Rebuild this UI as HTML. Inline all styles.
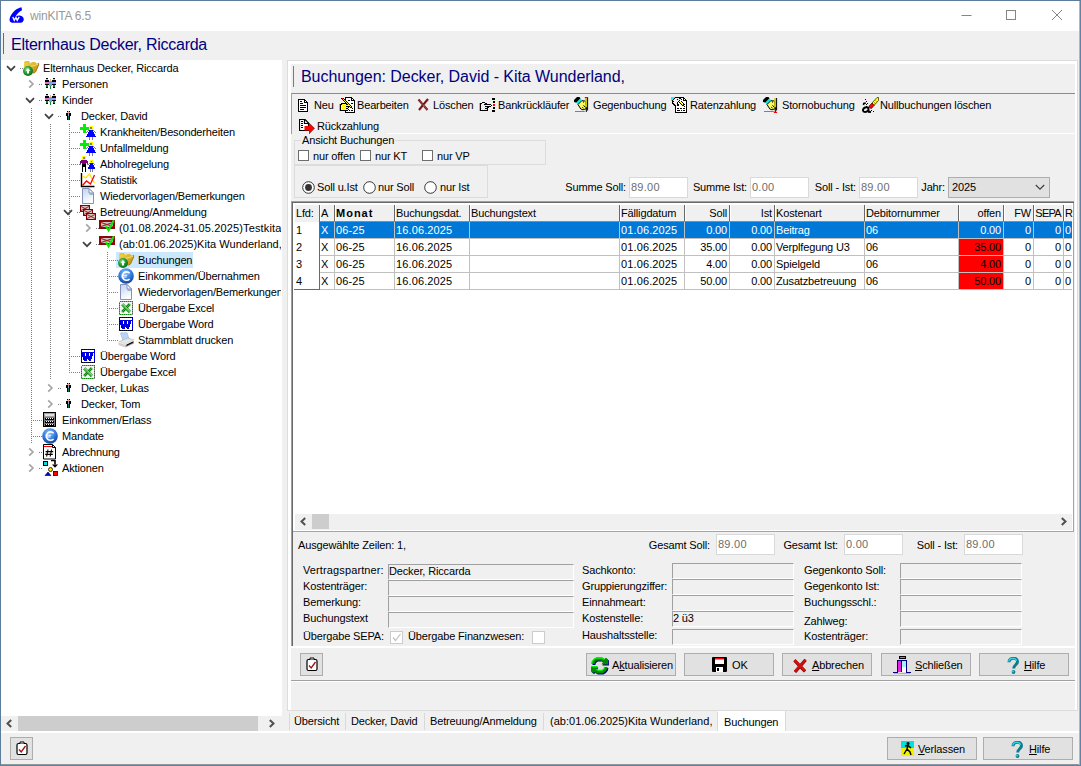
<!DOCTYPE html>
<html><head><meta charset="utf-8"><title>winKITA 6.5</title>
<style>
*{box-sizing:border-box;margin:0;padding:0}
html,body{width:1081px;height:766px;overflow:hidden;background:#f0f0f0}
body{font-family:"Liberation Sans",sans-serif;font-size:11px;color:#000;position:relative;letter-spacing:-0.15px}
.a{position:absolute}
.t{position:absolute;white-space:nowrap;line-height:13px;height:13px}
.navy{color:#000080}
.win{position:absolute;left:0;top:0;width:1081px;height:766px;border:1px solid #5b7d9b;border-right-color:#6183a3;border-bottom-color:#6183a3;pointer-events:none}
.btn{position:absolute;height:23px;background:#e1e1e1;border:1px solid #adadad}
.inp{position:absolute;background:#fff;border:1px solid #d9d9d9;color:#6d6d6d;height:21px;line-height:18px;padding-left:1px;font-size:11px;letter-spacing:0.25px}
.fld{position:absolute;height:16px;border-top:1px solid #a0a0a0;border-left:1px solid #a0a0a0;border-bottom:1px solid #fff;border-right:1px solid #fff;line-height:13px;white-space:nowrap}
.cb{position:absolute;width:13px;height:13px;background:#fff;border:1px solid #333}
.rd{position:absolute;width:13px;height:13px;background:#fff;border:1px solid #333;border-radius:50%}
</style></head>
<body>
<div class="a" style="left:1px;top:1px;width:1079px;height:30px;background:#fff"></div>
<div class="t " style="left:30px;top:9px;font-size:12px;color:#999;letter-spacing:-0.2px;line-height:14px;height:14px">winKITA 6.5</div>
<svg class="a" style="left:9px;top:6px" width="16" height="18" viewBox="0 0 16 18"><path d="M12.500 1.200c-5 1-8.500 4.500-10.500 8-1.800 3-2.500 7.300 1.500 7.600h8c3.500 0 4.500-4.800 1.500-6.600-2-1.200-4.500-.6-6.500.3 1.500-2.500 3.500-4.800 6.500-6.300z" fill="#0000ff"/><path d="M3.800 11l1.500 3.300 1.700-2.800 1.200 2.800 2-3.500" fill="none" stroke="#fff" stroke-width="1.400"/></svg>
<svg class="a" style="left:950px;top:0;width:131px;height:31px" viewBox="0 0 131 31"><g fill="none" stroke="#858585" stroke-width="1"><path d="M11.5 15.5h10"/><rect x="56.5" y="10.5" width="9" height="9"/><path d="M102 10l10 10M112 10l-10 10"/></g></svg>
<div class="a" style="left:3px;top:33px;width:1px;height:21px;background:#6a6a6a"></div>
<div class="t navy" style="left:11px;top:35px;font-size:16px;line-height:19px;height:19px;letter-spacing:-0.25px">Elternhaus Decker, Riccarda</div>
<div class="a" style="left:1px;top:60px;width:281px;height:656px;background:#fff"></div>
<div class="a" style="left:287px;top:60px;width:791px;height:651px;border:1px solid #dcdcdc;background:#f0f0f0"></div>
<div class="a" style="left:288px;top:61px;width:789px;height:3px;background:#fff"></div>
<div class="a" style="left:288px;top:61px;width:3px;height:649px;background:#fff"></div>
<div class="a" style="left:1075px;top:61px;width:2px;height:649px;background:#fff"></div>
<div class="a" style="left:1px;top:60px;width:280px;height:656px;overflow:hidden">
<div class="a" style="left:30px;top:48px;width:1px;height:336px;background:repeating-linear-gradient(180deg,#808080 0 1px,transparent 1px 2px)"></div>
<div class="a" style="left:49px;top:64px;width:1px;height:255px;background:repeating-linear-gradient(180deg,#808080 0 1px,transparent 1px 2px)"></div>
<div class="a" style="left:68px;top:64px;width:1px;height:249px;background:repeating-linear-gradient(180deg,#808080 0 1px,transparent 1px 2px)"></div>
<div class="a" style="left:106px;top:192px;width:1px;height:89px;background:repeating-linear-gradient(180deg,#808080 0 1px,transparent 1px 2px)"></div>
<svg class="a" style="left:5px;top:5px" width="10" height="7" viewBox="0 0 10 7"><path d="M1 1.200l4 4 4-4" fill="none" stroke="#404040" stroke-width="1.700"/></svg>
<div class="a" style="left:19px;top:8px;width:3px;height:1px;background:repeating-linear-gradient(90deg,#808080 0 1px,transparent 1px 2px)"></div>
<svg class="a" style="left:22px;top:0px" width="17" height="17" viewBox="0 0 17 17"><defs><radialGradient id="gc" cx="0.4" cy="0.35" r="0.7"><stop offset="0" stop-color="#8ae08a"/><stop offset="0.55" stop-color="#1f9a2f"/><stop offset="1" stop-color="#0a6418"/></radialGradient><linearGradient id="fy" x1="0" y1="0" x2="1" y2="1"><stop offset="0" stop-color="#f8dc50"/><stop offset="1" stop-color="#b88410"/></linearGradient></defs><path d="M1 2.300L2.200 1H6L7 2.300V7H1z" fill="#eec22c"/><path d="M1 3.300H7.200L9 2H12L13.200 3.400 15.600 3.200 15.600 5 12.500 12 10.500 13.200H5V7H1z" fill="url(#fy)"/><path d="M15.600 3.200V5L12.500 12 10.500 13.200" fill="none" stroke="#a87808" stroke-width="1"/><path d="M7.500 6.500L15 4.300" stroke="#fbe680" stroke-width=".8"/><circle cx="5" cy="11" r="5" fill="url(#gc)"/><path d="M5 8l2.400 2.700h-1.400v2.700h-2v-2.700h-1.400z" fill="#fff"/></svg>
<div class="t" style="left:42px;top:2px;">Elternhaus Decker, Riccarda</div>
<svg class="a" style="left:26.5px;top:19px" width="7" height="10" viewBox="0 0 7 10"><path d="M1.200 1.300l3.700 3.700-3.700 3.700" fill="none" stroke="#a6a6a6" stroke-width="1.700"/></svg>
<div class="a" style="left:38px;top:24px;width:3px;height:1px;background:repeating-linear-gradient(90deg,#808080 0 1px,transparent 1px 2px)"></div>
<svg class="a" style="left:44px;top:18px" width="11" height="11" viewBox="0 0 11 11" shape-rendering="crispEdges"><path fill="#000" d="M1 0h2v1h-2zM8 0h2v1h-2zM0 2h4v1h-4zM7 2h4v1h-4zM0 3h4v1h-4zM7 3h4v1h-4zM0 6h4v1h-4zM7 6h4v1h-4zM1 9h2v1h-2zM8 9h2v1h-2z"/><path fill="#f0b070" d="M1 1h2v1h-2zM5 1h1v1h-1zM8 1h2v1h-2zM5 2h1v1h-1z"/><path fill="#70a8e0" d="M4 3h3v1h-3zM4 4h3v1h-3zM4 5h3v1h-3zM4 6h3v1h-3zM4 7h3v1h-3z"/><path fill="#d070d8" d="M0 4h4v1h-4zM0 5h4v1h-4z"/><path fill="#9898ff" d="M7 4h4v1h-4zM7 5h4v1h-4z"/><path fill="#0a8a2a" d="M1 7h2v1h-2zM8 7h2v1h-2zM1 8h2v1h-2zM5 8h1v1h-1zM8 8h2v1h-2zM5 9h1v1h-1zM5 10h1v1h-1z"/></svg>
<div class="t" style="left:61px;top:18px;">Personen</div>
<svg class="a" style="left:24px;top:37px" width="10" height="7" viewBox="0 0 10 7"><path d="M1 1.200l4 4 4-4" fill="none" stroke="#404040" stroke-width="1.700"/></svg>
<div class="a" style="left:38px;top:40px;width:3px;height:1px;background:repeating-linear-gradient(90deg,#808080 0 1px,transparent 1px 2px)"></div>
<svg class="a" style="left:44px;top:34px" width="11" height="11" viewBox="0 0 11 11" shape-rendering="crispEdges"><path fill="#000" d="M1 0h2v1h-2zM8 0h2v1h-2zM0 2h4v1h-4zM7 2h4v1h-4zM0 3h4v1h-4zM7 3h4v1h-4zM0 6h4v1h-4zM7 6h4v1h-4zM1 9h2v1h-2zM8 9h2v1h-2z"/><path fill="#f0b070" d="M1 1h2v1h-2zM5 1h1v1h-1zM8 1h2v1h-2zM5 2h1v1h-1z"/><path fill="#70a8e0" d="M4 3h3v1h-3zM4 4h3v1h-3zM4 5h3v1h-3zM4 6h3v1h-3zM4 7h3v1h-3z"/><path fill="#d070d8" d="M0 4h4v1h-4zM0 5h4v1h-4z"/><path fill="#9898ff" d="M7 4h4v1h-4zM7 5h4v1h-4z"/><path fill="#0a8a2a" d="M1 7h2v1h-2zM8 7h2v1h-2zM1 8h2v1h-2zM5 8h1v1h-1zM8 8h2v1h-2zM5 9h1v1h-1zM5 10h1v1h-1z"/></svg>
<div class="t" style="left:61px;top:34px;">Kinder</div>
<svg class="a" style="left:43px;top:53px" width="10" height="7" viewBox="0 0 10 7"><path d="M1 1.200l4 4 4-4" fill="none" stroke="#404040" stroke-width="1.700"/></svg>
<div class="a" style="left:57px;top:56px;width:3px;height:1px;background:repeating-linear-gradient(90deg,#808080 0 1px,transparent 1px 2px)"></div>
<svg class="a" style="left:65px;top:51px" width="5" height="9" viewBox="0 0 5 9" shape-rendering="crispEdges"><path fill="#000" d="M1 0h1v1h-1zM3 0h1v1h-1zM0 2h2v1h-2zM3 2h2v1h-2zM0 3h2v1h-2zM3 3h2v1h-2zM0 4h2v1h-2zM3 4h2v1h-2zM1 5h1v1h-1zM3 5h1v1h-1zM1 6h1v1h-1zM3 6h1v1h-1zM1 7h1v1h-1zM3 7h1v1h-1zM1 8h1v1h-1zM3 8h1v1h-1z"/><path fill="#f0b070" d="M2 0h1v1h-1zM1 1h3v1h-3z"/><path fill="#9898ff" d="M2 2h1v1h-1zM2 3h1v1h-1zM2 4h1v1h-1z"/><path fill="#107060" d="M2 5h1v1h-1zM2 6h1v1h-1zM2 7h1v1h-1zM2 8h1v1h-1z"/></svg>
<div class="t" style="left:80px;top:50px;">Decker, David</div>
<div class="a" style="left:70px;top:72px;width:9px;height:1px;background:repeating-linear-gradient(90deg,#808080 0 1px,transparent 1px 2px)"></div>
<svg class="a" style="left:79px;top:64px" width="16" height="16" viewBox="0 0 16 16" shape-rendering="crispEdges"><path fill="#00f000" d="M3 0h3v1h-3zM3 1h3v1h-3zM3 2h3v1h-3zM0 3h9v1h-9zM0 4h9v1h-9zM0 5h9v1h-9zM3 6h3v1h-3zM3 7h3v1h-3zM3 8h3v1h-3z"/><path fill="#ffff00" d="M9 2h4v1h-4zM9 3h1v1h-1zM12 3h1v1h-1zM9 4h1v1h-1zM12 4h1v1h-1zM9 5h4v1h-4z"/><path fill="#808080" d="M10 3h2v1h-2zM10 4h2v1h-2zM8 6h1v1h-1zM13 6h1v1h-1zM7 7h1v1h-1zM14 7h1v1h-1zM6 8h1v1h-1zM15 8h1v1h-1zM9 13h1v1h-1zM12 13h1v1h-1zM9 14h1v1h-1zM12 14h1v1h-1zM9 15h1v1h-1zM12 15h1v1h-1z"/><path fill="#0000ff" d="M9 6h4v1h-4zM9 7h4v1h-4zM8 8h6v1h-6zM8 9h6v1h-6zM7 10h8v1h-8zM7 11h8v1h-8zM6 12h10v1h-10z"/></svg>
<div class="t" style="left:99px;top:66px;">Krankheiten/Besonderheiten</div>
<div class="a" style="left:70px;top:88px;width:9px;height:1px;background:repeating-linear-gradient(90deg,#808080 0 1px,transparent 1px 2px)"></div>
<svg class="a" style="left:79px;top:80px" width="16" height="16" viewBox="0 0 16 16" shape-rendering="crispEdges"><path fill="#00f000" d="M3 0h3v1h-3zM3 1h3v1h-3zM3 2h3v1h-3zM0 3h9v1h-9zM0 4h9v1h-9zM0 5h9v1h-9zM3 6h3v1h-3zM3 7h3v1h-3zM3 8h3v1h-3z"/><path fill="#ffff00" d="M9 2h4v1h-4zM9 3h1v1h-1zM12 3h1v1h-1zM9 4h1v1h-1zM12 4h1v1h-1zM9 5h4v1h-4z"/><path fill="#808080" d="M10 3h2v1h-2zM10 4h2v1h-2zM8 6h1v1h-1zM13 6h1v1h-1zM7 7h1v1h-1zM14 7h1v1h-1zM6 8h1v1h-1zM15 8h1v1h-1zM9 13h1v1h-1zM12 13h1v1h-1zM9 14h1v1h-1zM12 14h1v1h-1zM9 15h1v1h-1zM12 15h1v1h-1z"/><path fill="#0000ff" d="M9 6h4v1h-4zM9 7h4v1h-4zM8 8h6v1h-6zM8 9h6v1h-6zM7 10h8v1h-8zM7 11h8v1h-8zM6 12h10v1h-10z"/></svg>
<div class="t" style="left:99px;top:82px;">Unfallmeldung</div>
<div class="a" style="left:70px;top:104px;width:9px;height:1px;background:repeating-linear-gradient(90deg,#808080 0 1px,transparent 1px 2px)"></div>
<svg class="a" style="left:79px;top:96px" width="16" height="16" viewBox="0 0 16 16" shape-rendering="crispEdges"><path fill="#ffff00" d="M2 0h4v1h-4zM2 1h1v1h-1zM5 1h1v1h-1zM2 2h1v1h-1zM5 2h1v1h-1zM2 3h4v1h-4zM10 4h3v1h-3zM10 5h1v1h-1zM12 5h1v1h-1zM10 6h3v1h-3z"/><path fill="#808080" d="M3 1h2v1h-2zM3 2h2v1h-2zM11 5h1v1h-1zM9 7h1v1h-1zM13 7h1v1h-1zM0 8h1v1h-1zM7 8h2v1h-2zM14 8h1v1h-1zM10 13h1v1h-1zM12 13h1v1h-1zM10 14h1v1h-1zM12 14h1v1h-1zM10 15h1v1h-1zM12 15h1v1h-1z"/><path fill="#800080" d="M1 4h6v1h-6zM0 5h8v1h-8zM0 6h8v1h-8zM0 7h1v1h-1zM2 7h4v1h-4zM7 7h1v1h-1z"/><path fill="#0000ff" d="M10 7h3v1h-3zM10 8h3v1h-3zM9 9h5v1h-5zM9 10h5v1h-5zM8 11h7v1h-7zM8 12h7v1h-7z"/><path fill="#000" d="M2 8h4v1h-4zM2 9h4v1h-4zM2 10h4v1h-4zM2 11h1v1h-1zM5 11h1v1h-1zM2 12h1v1h-1zM5 12h1v1h-1zM2 13h1v1h-1zM5 13h1v1h-1zM2 14h1v1h-1zM5 14h1v1h-1zM2 15h1v1h-1zM5 15h1v1h-1z"/></svg>
<div class="t" style="left:99px;top:98px;">Abholregelung</div>
<div class="a" style="left:70px;top:120px;width:9px;height:1px;background:repeating-linear-gradient(90deg,#808080 0 1px,transparent 1px 2px)"></div>
<svg class="a" style="left:79px;top:112px" width="16" height="16" viewBox="0 0 16 16"><path d="M1.5 1v13.5h13" stroke="#000" stroke-width="1.4" fill="none"/><path d="M2.5 4l3 2 4-4 3 6 2 3" stroke="#ffe600" stroke-width="1.3" fill="none"/><path d="M2.5 13.5l4-4.5 4 3 4-9" stroke="#ff0000" stroke-width="1.3" fill="none"/></svg>
<div class="t" style="left:99px;top:114px;">Statistik</div>
<div class="a" style="left:70px;top:136px;width:9px;height:1px;background:repeating-linear-gradient(90deg,#808080 0 1px,transparent 1px 2px)"></div>
<svg class="a" style="left:81px;top:128px" width="12" height="16" viewBox="0 0 12 16"><defs><linearGradient id="dg" x1="0" y1="0" x2="0.3" y2="1"><stop offset="0" stop-color="#bcd4f4"/><stop offset="1" stop-color="#fdfeff"/></linearGradient></defs><path d="M.5 .5h6.5l4.5 4.5v10.5h-11z" fill="url(#dg)" stroke="#8890b8" stroke-width="1"/><path d="M7 .5v4.5h4.5z" fill="#f4f8ff" stroke="#8890b8" stroke-width="1"/><path d="M7.5 5.5h4v1.5h-4z" fill="#7888a8" opacity=".6"/></svg>
<div class="t" style="left:99px;top:130px;">Wiedervorlagen/Bemerkungen</div>
<svg class="a" style="left:62px;top:149px" width="10" height="7" viewBox="0 0 10 7"><path d="M1 1.200l4 4 4-4" fill="none" stroke="#404040" stroke-width="1.700"/></svg>
<div class="a" style="left:76px;top:152px;width:3px;height:1px;background:repeating-linear-gradient(90deg,#808080 0 1px,transparent 1px 2px)"></div>
<svg class="a" style="left:79px;top:144px" width="17" height="17" viewBox="0 0 17 17"><rect x="0" y="1" width="10" height="7" fill="#800000"/><rect x="1" y="2" width="8" height="5" fill="#d8c8c8"/><path d="M1 2.5l8 4M1 6.5l8 -4" stroke="#a02020" stroke-width="1"/><rect x="3" y="5" width="10" height="7" fill="#800000"/><rect x="4" y="6" width="8" height="5" fill="#d8c8c8"/><path d="M4 6.5l8 4M4 10.5l8 -4" stroke="#a02020" stroke-width="1"/><rect x="6" y="9" width="10" height="7" fill="#800000"/><rect x="7" y="10" width="8" height="5" fill="#d8c8c8"/><path d="M7 10.5l8 4M7 14.5l8 -4" stroke="#a02020" stroke-width="1"/></svg>
<div class="t" style="left:99px;top:146px;">Betreuung/Anmeldung</div>
<svg class="a" style="left:83.5px;top:163px" width="7" height="10" viewBox="0 0 7 10"><path d="M1.200 1.300l3.700 3.700-3.700 3.700" fill="none" stroke="#a6a6a6" stroke-width="1.700"/></svg>
<div class="a" style="left:95px;top:168px;width:3px;height:1px;background:repeating-linear-gradient(90deg,#808080 0 1px,transparent 1px 2px)"></div>
<svg class="a" style="left:98px;top:160px" width="17" height="13" viewBox="0 0 17 13"><rect x="0" y="0" width="16" height="9" fill="#8a0808"/><rect x="2" y="2" width="12" height="5" fill="#d0c8c8"/><path d="M2 2.5l12 4M2 6.5l12-4" stroke="#a02020" stroke-width="1.2"/><path d="M7 6.2l2.6 4.3 5.2-10.3" stroke="#00f000" stroke-width="2" fill="none"/></svg>
<div class="t" style="left:118px;top:162px;letter-spacing:0.13px;">(01.08.2024-31.05.2025)Testkita</div>
<svg class="a" style="left:81px;top:181px" width="10" height="7" viewBox="0 0 10 7"><path d="M1 1.200l4 4 4-4" fill="none" stroke="#404040" stroke-width="1.700"/></svg>
<div class="a" style="left:95px;top:184px;width:3px;height:1px;background:repeating-linear-gradient(90deg,#808080 0 1px,transparent 1px 2px)"></div>
<svg class="a" style="left:98px;top:176px" width="17" height="13" viewBox="0 0 17 13"><rect x="0" y="0" width="16" height="9" fill="#8a0808"/><rect x="2" y="2" width="12" height="5" fill="#d0c8c8"/><path d="M2 2.5l12 4M2 6.5l12-4" stroke="#a02020" stroke-width="1.2"/><path d="M7 6.2l2.6 4.3 5.2-10.3" stroke="#00f000" stroke-width="2" fill="none"/></svg>
<div class="t" style="left:118px;top:178px;letter-spacing:0.03px;">(ab:01.06.2025)Kita Wunderland,</div>
<div class="a" style="left:115px;top:192px;width:77px;height:16px;background:#cce8ff"></div>
<div class="a" style="left:108px;top:200px;width:9px;height:1px;background:repeating-linear-gradient(90deg,#808080 0 1px,transparent 1px 2px)"></div>
<svg class="a" style="left:117px;top:192px" width="17" height="17" viewBox="0 0 17 17"><defs><radialGradient id="gc" cx="0.4" cy="0.35" r="0.7"><stop offset="0" stop-color="#8ae08a"/><stop offset="0.55" stop-color="#1f9a2f"/><stop offset="1" stop-color="#0a6418"/></radialGradient><linearGradient id="fy" x1="0" y1="0" x2="1" y2="1"><stop offset="0" stop-color="#f8dc50"/><stop offset="1" stop-color="#b88410"/></linearGradient></defs><path d="M1 2.300L2.200 1H6L7 2.300V7H1z" fill="#eec22c"/><path d="M1 3.300H7.200L9 2H12L13.200 3.400 15.600 3.200 15.600 5 12.500 12 10.500 13.200H5V7H1z" fill="url(#fy)"/><path d="M15.600 3.200V5L12.500 12 10.500 13.200" fill="none" stroke="#a87808" stroke-width="1"/><path d="M7.500 6.500L15 4.300" stroke="#fbe680" stroke-width=".8"/><circle cx="5" cy="11" r="5" fill="url(#gc)"/><path d="M5 8l2.400 2.700h-1.400v2.700h-2v-2.700h-1.400z" fill="#fff"/></svg>
<div class="t" style="left:137px;top:194px;">Buchungen</div>
<div class="a" style="left:108px;top:216px;width:9px;height:1px;background:repeating-linear-gradient(90deg,#808080 0 1px,transparent 1px 2px)"></div>
<svg class="a" style="left:117px;top:208px" width="16" height="16" viewBox="0 0 16 16"><defs><radialGradient id="eg" cx="0.45" cy="0.3" r="0.75"><stop offset="0" stop-color="#8cc4ff"/><stop offset="0.55" stop-color="#2f7be0"/><stop offset="1" stop-color="#12348c"/></radialGradient></defs><circle cx="8" cy="8" r="7.8" fill="url(#eg)"/><path d="M11.6 5.2a4.2 4.2 0 1 0 0 5.8" fill="none" stroke="#fff" stroke-width="1.6"/><path d="M3.6 7.2h5.6M3.6 9h5" stroke="#fff" stroke-width="1.1"/></svg>
<div class="t" style="left:137px;top:210px;">Einkommen/Übernahmen</div>
<div class="a" style="left:108px;top:232px;width:9px;height:1px;background:repeating-linear-gradient(90deg,#808080 0 1px,transparent 1px 2px)"></div>
<svg class="a" style="left:119px;top:224px" width="12" height="16" viewBox="0 0 12 16"><defs><linearGradient id="dg" x1="0" y1="0" x2="0.3" y2="1"><stop offset="0" stop-color="#bcd4f4"/><stop offset="1" stop-color="#fdfeff"/></linearGradient></defs><path d="M.5 .5h6.5l4.5 4.5v10.5h-11z" fill="url(#dg)" stroke="#8890b8" stroke-width="1"/><path d="M7 .5v4.5h4.5z" fill="#f4f8ff" stroke="#8890b8" stroke-width="1"/><path d="M7.5 5.5h4v1.5h-4z" fill="#7888a8" opacity=".6"/></svg>
<div class="t" style="left:137px;top:226px;">Wiedervorlagen/Bemerkungen</div>
<div class="a" style="left:108px;top:248px;width:9px;height:1px;background:repeating-linear-gradient(90deg,#808080 0 1px,transparent 1px 2px)"></div>
<svg class="a" style="left:118px;top:241px" width="14" height="14" viewBox="0 0 14 14" shape-rendering="crispEdges"><defs><pattern id="pxl" width="2" height="2" patternUnits="userSpaceOnUse"><rect width="2" height="2" fill="#0a8a0a"/><rect x="1" width="1" height="1" fill="#7a8a7a"/><rect y="1" width="1" height="1" fill="#7a8a7a"/></pattern></defs><rect x="0" y="0" width="14" height="14" fill="#f4f4f4"/><path d="M.5 .5h13v13h-13z" fill="none" stroke="#0a8a0a" stroke-width="1" stroke-dasharray="1 1"/><path d="M.5 .5h13v13h-13z" fill="none" stroke="#909890" stroke-width="1" stroke-dasharray="1 1" stroke-dashoffset="1"/><path d="M3.200 3.300l7.800 7.800M10.800 3l-7.600 8" stroke="url(#pxl)" stroke-width="3" fill="none" shape-rendering="auto"/><path d="M3.500 3l8 8" stroke="#f4f4f4" stroke-width=".8" shape-rendering="auto"/></svg>
<div class="t" style="left:137px;top:242px;">Übergabe Excel</div>
<div class="a" style="left:108px;top:264px;width:9px;height:1px;background:repeating-linear-gradient(90deg,#808080 0 1px,transparent 1px 2px)"></div>
<svg class="a" style="left:118px;top:257px" width="14" height="14" viewBox="0 0 14 14" shape-rendering="crispEdges"><defs><pattern id="pwd" width="2" height="2" patternUnits="userSpaceOnUse"><rect width="2" height="2" fill="#0000f0"/><rect x="1" width="1" height="1" fill="#000"/><rect y="1" width="1" height="1" fill="#000"/></pattern></defs><rect x="0" y="0" width="14" height="14" fill="#fff"/><path d="M.5 .5h13v13h-13z" fill="none" stroke="#0000f0" stroke-width="1"/><path d="M.5 .5h13v13h-13z" fill="none" stroke="#000" stroke-width="1" stroke-dasharray="1 1"/><path d="M1 3h12l-3 9h-2l-1-3-1 3h-3l-2-6z" fill="url(#pwd)"/><rect x="4" y="4" width="1" height="3" fill="#fff"/><rect x="8" y="4" width="1" height="3" fill="#fff"/></svg>
<div class="t" style="left:137px;top:258px;">Übergabe Word</div>
<div class="a" style="left:108px;top:280px;width:9px;height:1px;background:repeating-linear-gradient(90deg,#808080 0 1px,transparent 1px 2px)"></div>
<svg class="a" style="left:117px;top:272px" width="17" height="16" viewBox="0 0 17 16"><path d="M2.500 1.200C4 -.2 5.500 1.800 7.200 .4L9.200 .9 11 7.200 5 8.800z" fill="#b8d4f6" stroke="#8fb0e0" stroke-width=".6"/><path d="M1 9.600L10 6 16 8 7.500 12.300z" fill="#e6e6e6" stroke="#a8a8a8" stroke-width=".5"/><path d="M.5 10L7.500 12.500V15.600L.5 12.900z" fill="#cfcfcf"/><path d="M7.500 12.500L16 8.300V11.400L7.500 15.600z" fill="#a4a4a4"/><path d="M8.500 13.400L15 10.200" stroke="#111" stroke-width="1.300"/><path d="M9.500 14.500l4-2 1.200.7-4 2z" fill="#f4f4f4"/><path d="M.5 10L7.500 12.500 16 8.300" fill="none" stroke="#fafafa" stroke-width=".7"/></svg>
<div class="t" style="left:137px;top:274px;">Stammblatt drucken</div>
<div class="a" style="left:70px;top:296px;width:9px;height:1px;background:repeating-linear-gradient(90deg,#808080 0 1px,transparent 1px 2px)"></div>
<svg class="a" style="left:80px;top:289px" width="14" height="14" viewBox="0 0 14 14" shape-rendering="crispEdges"><defs><pattern id="pwd" width="2" height="2" patternUnits="userSpaceOnUse"><rect width="2" height="2" fill="#0000f0"/><rect x="1" width="1" height="1" fill="#000"/><rect y="1" width="1" height="1" fill="#000"/></pattern></defs><rect x="0" y="0" width="14" height="14" fill="#fff"/><path d="M.5 .5h13v13h-13z" fill="none" stroke="#0000f0" stroke-width="1"/><path d="M.5 .5h13v13h-13z" fill="none" stroke="#000" stroke-width="1" stroke-dasharray="1 1"/><path d="M1 3h12l-3 9h-2l-1-3-1 3h-3l-2-6z" fill="url(#pwd)"/><rect x="4" y="4" width="1" height="3" fill="#fff"/><rect x="8" y="4" width="1" height="3" fill="#fff"/></svg>
<div class="t" style="left:99px;top:290px;">Übergabe Word</div>
<div class="a" style="left:70px;top:312px;width:9px;height:1px;background:repeating-linear-gradient(90deg,#808080 0 1px,transparent 1px 2px)"></div>
<svg class="a" style="left:80px;top:305px" width="14" height="14" viewBox="0 0 14 14" shape-rendering="crispEdges"><defs><pattern id="pxl" width="2" height="2" patternUnits="userSpaceOnUse"><rect width="2" height="2" fill="#0a8a0a"/><rect x="1" width="1" height="1" fill="#7a8a7a"/><rect y="1" width="1" height="1" fill="#7a8a7a"/></pattern></defs><rect x="0" y="0" width="14" height="14" fill="#f4f4f4"/><path d="M.5 .5h13v13h-13z" fill="none" stroke="#0a8a0a" stroke-width="1" stroke-dasharray="1 1"/><path d="M.5 .5h13v13h-13z" fill="none" stroke="#909890" stroke-width="1" stroke-dasharray="1 1" stroke-dashoffset="1"/><path d="M3.200 3.300l7.800 7.800M10.800 3l-7.600 8" stroke="url(#pxl)" stroke-width="3" fill="none" shape-rendering="auto"/><path d="M3.500 3l8 8" stroke="#f4f4f4" stroke-width=".8" shape-rendering="auto"/></svg>
<div class="t" style="left:99px;top:306px;">Übergabe Excel</div>
<svg class="a" style="left:45.5px;top:323px" width="7" height="10" viewBox="0 0 7 10"><path d="M1.200 1.300l3.700 3.700-3.700 3.700" fill="none" stroke="#a6a6a6" stroke-width="1.700"/></svg>
<div class="a" style="left:57px;top:328px;width:3px;height:1px;background:repeating-linear-gradient(90deg,#808080 0 1px,transparent 1px 2px)"></div>
<svg class="a" style="left:65px;top:323px" width="5" height="9" viewBox="0 0 5 9" shape-rendering="crispEdges"><path fill="#000" d="M1 0h1v1h-1zM3 0h1v1h-1zM0 2h2v1h-2zM3 2h2v1h-2zM0 3h2v1h-2zM3 3h2v1h-2zM0 4h2v1h-2zM3 4h2v1h-2zM1 5h1v1h-1zM3 5h1v1h-1zM1 6h1v1h-1zM3 6h1v1h-1zM1 7h1v1h-1zM3 7h1v1h-1zM1 8h1v1h-1zM3 8h1v1h-1z"/><path fill="#f0b070" d="M2 0h1v1h-1zM1 1h3v1h-3z"/><path fill="#9898ff" d="M2 2h1v1h-1zM2 3h1v1h-1zM2 4h1v1h-1z"/><path fill="#107060" d="M2 5h1v1h-1zM2 6h1v1h-1zM2 7h1v1h-1zM2 8h1v1h-1z"/></svg>
<div class="t" style="left:80px;top:322px;">Decker, Lukas</div>
<svg class="a" style="left:45.5px;top:339px" width="7" height="10" viewBox="0 0 7 10"><path d="M1.200 1.300l3.700 3.700-3.700 3.700" fill="none" stroke="#a6a6a6" stroke-width="1.700"/></svg>
<div class="a" style="left:57px;top:344px;width:3px;height:1px;background:repeating-linear-gradient(90deg,#808080 0 1px,transparent 1px 2px)"></div>
<svg class="a" style="left:65px;top:339px" width="5" height="9" viewBox="0 0 5 9" shape-rendering="crispEdges"><path fill="#000" d="M1 0h1v1h-1zM3 0h1v1h-1zM0 2h2v1h-2zM3 2h2v1h-2zM0 3h2v1h-2zM3 3h2v1h-2zM0 4h2v1h-2zM3 4h2v1h-2zM1 5h1v1h-1zM3 5h1v1h-1zM1 6h1v1h-1zM3 6h1v1h-1zM1 7h1v1h-1zM3 7h1v1h-1zM1 8h1v1h-1zM3 8h1v1h-1z"/><path fill="#f0b070" d="M2 0h1v1h-1zM1 1h3v1h-3z"/><path fill="#9898ff" d="M2 2h1v1h-1zM2 3h1v1h-1zM2 4h1v1h-1z"/><path fill="#107060" d="M2 5h1v1h-1zM2 6h1v1h-1zM2 7h1v1h-1zM2 8h1v1h-1z"/></svg>
<div class="t" style="left:80px;top:338px;">Decker, Tom</div>
<div class="a" style="left:32px;top:360px;width:9px;height:1px;background:repeating-linear-gradient(90deg,#808080 0 1px,transparent 1px 2px)"></div>
<svg class="a" style="left:42px;top:352px" width="13" height="15" viewBox="0 0 13 15" shape-rendering="crispEdges"><path fill="#000" d="M0 0h13v1h-13zM0 1h1v1h-1zM12 1h1v1h-1zM0 2h1v1h-1zM12 2h1v1h-1zM0 3h1v1h-1zM12 3h1v1h-1zM0 4h1v1h-1zM12 4h1v1h-1zM0 5h1v1h-1zM12 5h1v1h-1zM0 6h1v1h-1zM2 6h1v1h-1zM4 6h1v1h-1zM6 6h1v1h-1zM8 6h1v1h-1zM10 6h1v1h-1zM12 6h1v1h-1zM0 7h1v1h-1zM2 7h9v1h-9zM12 7h1v1h-1zM0 8h1v1h-1zM12 8h1v1h-1zM0 9h1v1h-1zM2 9h1v1h-1zM4 9h1v1h-1zM6 9h1v1h-1zM8 9h1v1h-1zM10 9h1v1h-1zM12 9h1v1h-1zM0 10h1v1h-1zM2 10h9v1h-9zM12 10h1v1h-1zM0 11h1v1h-1zM12 11h1v1h-1zM0 12h1v1h-1zM2 12h1v1h-1zM4 12h1v1h-1zM6 12h1v1h-1zM8 12h1v1h-1zM10 12h1v1h-1zM12 12h1v1h-1zM0 13h1v1h-1zM2 13h9v1h-9zM12 13h1v1h-1zM0 14h13v1h-13z"/><path fill="#a0a0a0" d="M1 1h11v1h-11zM1 2h1v1h-1zM11 2h1v1h-1zM1 3h1v1h-1zM11 3h1v1h-1zM1 4h11v1h-11z"/><path fill="#e0e0e0" d="M2 2h9v1h-9zM2 3h9v1h-9z"/><path fill="#808080" d="M1 5h11v1h-11zM1 6h1v1h-1zM11 6h1v1h-1zM1 7h1v1h-1zM11 7h1v1h-1zM1 8h11v1h-11zM1 9h1v1h-1zM11 9h1v1h-1zM1 10h1v1h-1zM11 10h1v1h-1zM1 11h11v1h-11zM1 12h1v1h-1zM11 12h1v1h-1zM1 13h1v1h-1zM11 13h1v1h-1z"/><path fill="#fff" d="M3 6h1v1h-1zM5 6h1v1h-1zM7 6h1v1h-1zM9 6h1v1h-1zM3 9h1v1h-1zM5 9h1v1h-1zM7 9h1v1h-1zM9 9h1v1h-1zM3 12h1v1h-1zM5 12h1v1h-1zM7 12h1v1h-1zM9 12h1v1h-1z"/></svg>
<div class="t" style="left:61px;top:354px;">Einkommen/Erlass</div>
<div class="a" style="left:32px;top:376px;width:9px;height:1px;background:repeating-linear-gradient(90deg,#808080 0 1px,transparent 1px 2px)"></div>
<svg class="a" style="left:41px;top:368px" width="16" height="16" viewBox="0 0 16 16"><defs><radialGradient id="eg" cx="0.45" cy="0.3" r="0.75"><stop offset="0" stop-color="#8cc4ff"/><stop offset="0.55" stop-color="#2f7be0"/><stop offset="1" stop-color="#12348c"/></radialGradient></defs><circle cx="8" cy="8" r="7.8" fill="url(#eg)"/><path d="M11.6 5.2a4.2 4.2 0 1 0 0 5.8" fill="none" stroke="#fff" stroke-width="1.6"/><path d="M3.6 7.2h5.6M3.6 9h5" stroke="#fff" stroke-width="1.1"/></svg>
<div class="t" style="left:61px;top:370px;">Mandate</div>
<svg class="a" style="left:26.5px;top:387px" width="7" height="10" viewBox="0 0 7 10"><path d="M1.200 1.300l3.700 3.700-3.700 3.700" fill="none" stroke="#a6a6a6" stroke-width="1.700"/></svg>
<div class="a" style="left:38px;top:392px;width:3px;height:1px;background:repeating-linear-gradient(90deg,#808080 0 1px,transparent 1px 2px)"></div>
<svg class="a" style="left:42px;top:384px" width="13" height="16" viewBox="0 0 13 16"><path d="M.5 .5h9l3 3v11.5h-12z" fill="#fff" stroke="#000"/><path d="M9.5 .5v3h3" fill="none" stroke="#000"/><path d="M1 2.5h8" stroke="#ff0000" stroke-width="1"/><path d="M5 5.5l-1.4 7M8.6 5.5l-1.4 7M2.6 7.6h7.6M2.2 10.4h7.6" stroke="#000" stroke-width="1.1"/></svg>
<div class="t" style="left:61px;top:386px;">Abrechnung</div>
<svg class="a" style="left:26.5px;top:403px" width="7" height="10" viewBox="0 0 7 10"><path d="M1.200 1.300l3.700 3.700-3.700 3.700" fill="none" stroke="#a6a6a6" stroke-width="1.700"/></svg>
<div class="a" style="left:38px;top:408px;width:3px;height:1px;background:repeating-linear-gradient(90deg,#808080 0 1px,transparent 1px 2px)"></div>
<svg class="a" style="left:42px;top:400px" width="16" height="16" viewBox="0 0 16 16"><rect x=".5" y="1.5" width="4" height="4" fill="#00e0e0" stroke="#000"/><path d="M8 .5h4v4" fill="none" stroke="#000" stroke-width="1.6"/><path d="M9 4.5h6l-3 3.2z" fill="#000"/><circle cx="7.5" cy="9.5" r="2" fill="#ffe600" stroke="#000" stroke-width=".8"/><path d="M2 15.5l3-3.5 3 3.5z" fill="#0000e0" stroke="#000" stroke-width=".6"/><rect x="10.5" y="11.5" width="4" height="4" fill="#ff0000" stroke="#000" stroke-width=".8"/></svg>
<div class="t" style="left:61px;top:402px;">Aktionen</div>
</div>
<div class="a" style="left:1px;top:716px;width:280px;height:15px;background:#f0f0f0"></div>
<div class="a" style="left:18px;top:716px;width:240px;height:15px;background:#cdcdcd"></div>
<svg class="a" style="left:5px;top:719px" width="8" height="9" viewBox="0 0 8 9"><path d="M6.200 1l-3.700 3.500 3.700 3.500" fill="none" stroke="#505050" stroke-width="2"/></svg>
<svg class="a" style="left:268px;top:719px" width="8" height="9" viewBox="0 0 8 9"><path d="M1.800 1l3.700 3.500-3.700 3.500" fill="none" stroke="#505050" stroke-width="2"/></svg>
<div class="a" style="left:293px;top:66px;width:1px;height:21px;background:#7a7a7a"></div>
<div class="t navy" style="left:301px;top:67px;font-size:16px;line-height:19px;height:19px;letter-spacing:-0.05px">Buchungen: Decker, David - Kita Wunderland,</div>
<div class="a" style="left:291px;top:93px;width:784px;height:1px;background:#8a8a8a"></div>
<div class="a" style="left:291px;top:93px;width:1px;height:41px;background:#a0a0a0"></div>
<div class="a" style="left:387px;top:133px;width:688px;height:1px;background:#fff"></div>
<svg class="a" style="left:298px;top:99px" width="10" height="13" viewBox="0 0 10 13" shape-rendering="crispEdges"><path fill="#000" d="M0 0h7v1h-7zM0 1h1v1h-1zM6 1h2v1h-2zM0 2h1v1h-1zM2 2h2v1h-2zM6 2h1v1h-1zM8 2h1v1h-1zM0 3h1v1h-1zM6 3h4v1h-4zM0 4h1v1h-1zM2 4h3v1h-3zM9 4h1v1h-1zM0 5h1v1h-1zM9 5h1v1h-1zM0 6h1v1h-1zM2 6h6v1h-6zM9 6h1v1h-1zM0 7h1v1h-1zM9 7h1v1h-1zM0 8h1v1h-1zM2 8h6v1h-6zM9 8h1v1h-1zM0 9h1v1h-1zM9 9h1v1h-1zM0 10h1v1h-1zM2 10h4v1h-4zM9 10h1v1h-1zM0 11h1v1h-1zM9 11h1v1h-1zM0 12h10v1h-10z"/><path fill="#fff" d="M1 1h5v1h-5zM1 2h1v1h-1zM4 2h2v1h-2zM7 2h1v1h-1zM1 3h5v1h-5zM1 4h1v1h-1zM5 4h4v1h-4zM1 5h8v1h-8zM1 6h1v1h-1zM8 6h1v1h-1zM1 7h8v1h-8zM1 8h1v1h-1zM8 8h1v1h-1zM1 9h8v1h-8zM1 10h1v1h-1zM6 10h3v1h-3zM1 11h8v1h-8z"/></svg>
<div class="t " style="left:314px;top:99px;">Neu</div>
<svg class="a" style="left:339px;top:97px" width="16" height="16" viewBox="0 0 16 16" shape-rendering="crispEdges"><path fill="#000" d="M6 0h7v1h-7zM2 1h1v1h-1zM4 1h1v1h-1zM6 1h1v1h-1zM12 1h2v1h-2zM3 2h1v1h-1zM5 2h2v1h-2zM12 2h1v1h-1zM14 2h1v1h-1zM4 3h1v1h-1zM6 3h1v1h-1zM9 3h2v1h-2zM12 3h4v1h-4zM5 4h1v1h-1zM7 4h1v1h-1zM15 4h1v1h-1zM6 5h1v1h-1zM8 5h1v1h-1zM15 5h1v1h-1zM2 6h6v1h-6zM9 6h1v1h-1zM12 6h2v1h-2zM15 6h1v1h-1zM1 7h2v1h-2zM7 7h2v1h-2zM10 7h1v1h-1zM15 7h1v1h-1zM1 8h1v1h-1zM11 8h1v1h-1zM15 8h1v1h-1zM1 9h1v1h-1zM7 9h4v1h-4zM12 9h1v1h-1zM15 9h1v1h-1zM1 10h1v1h-1zM9 10h1v1h-1zM11 10h2v1h-2zM15 10h1v1h-1zM1 11h1v1h-1zM7 11h2v1h-2zM13 11h1v1h-1zM15 11h1v1h-1zM1 12h1v1h-1zM9 12h1v1h-1zM15 12h1v1h-1zM1 13h8v1h-8zM10 13h1v1h-1zM12 13h2v1h-2zM15 13h1v1h-1zM6 14h1v1h-1zM15 14h1v1h-1zM6 15h10v1h-10z"/><path fill="#ff0000" d="M3 1h1v1h-1z"/><path fill="#fff" d="M7 1h5v1h-5zM7 2h5v1h-5zM13 2h1v1h-1zM7 3h2v1h-2zM11 3h1v1h-1zM8 4h7v1h-7zM9 5h6v1h-6zM10 6h2v1h-2zM14 6h1v1h-1zM4 7h1v1h-1zM6 7h1v1h-1zM11 7h4v1h-4zM3 8h1v1h-1zM5 8h1v1h-1zM12 8h3v1h-3zM2 9h1v1h-1zM4 9h1v1h-1zM6 9h1v1h-1zM13 9h2v1h-2zM3 10h1v1h-1zM5 10h1v1h-1zM10 10h1v1h-1zM13 10h2v1h-2zM2 11h1v1h-1zM4 11h1v1h-1zM6 11h1v1h-1zM9 11h4v1h-4zM14 11h1v1h-1zM3 12h1v1h-1zM5 12h1v1h-1zM10 12h5v1h-5zM9 13h1v1h-1zM11 13h1v1h-1zM14 13h1v1h-1zM7 14h8v1h-8z"/><path fill="#ffff00" d="M4 2h1v1h-1zM5 3h1v1h-1zM6 4h1v1h-1zM7 5h1v1h-1zM8 6h1v1h-1zM3 7h1v1h-1zM5 7h1v1h-1zM9 7h1v1h-1zM2 8h1v1h-1zM4 8h1v1h-1zM6 8h5v1h-5zM3 9h1v1h-1zM5 9h1v1h-1zM11 9h1v1h-1zM2 10h1v1h-1zM4 10h1v1h-1zM6 10h3v1h-3zM3 11h1v1h-1zM5 11h1v1h-1zM2 12h1v1h-1zM4 12h1v1h-1zM6 12h3v1h-3z"/><path fill="#00ffff" d="M0 7h1v1h-1zM0 8h1v1h-1zM0 9h1v1h-1zM0 10h1v1h-1zM0 11h1v1h-1zM0 12h1v1h-1zM0 13h1v1h-1z"/></svg>
<div class="t " style="left:357px;top:99px;">Bearbeiten</div>
<svg class="a" style="left:417px;top:98px" width="13" height="14" viewBox="0 0 13 14"><path d="M1.500 1.500l9 10.500M11 1l-9 11" stroke="#7a1010" stroke-width="2.100" fill="none"/><path d="M2.500 2.500l8 9.500M12 1.500l-9 11" stroke="#b0a0a0" stroke-width=".8" fill="none" opacity=".6"/></svg>
<div class="t " style="left:433px;top:99px;">Löschen</div>
<svg class="a" style="left:479px;top:98px" width="17" height="14" viewBox="0 0 17 14" shape-rendering="crispEdges"><path fill="#000" d="M13 0h3v1h-3zM13 1h3v1h-3zM14 3h2v1h-2zM3 4h3v1h-3zM14 4h2v1h-2zM1 5h2v1h-2zM6 5h2v1h-2zM1 6h1v1h-1zM5 6h7v1h-7zM1 7h1v1h-1zM12 7h1v1h-1zM1 8h1v1h-1zM6 8h6v1h-6zM1 9h1v1h-1zM8 9h2v1h-2zM14 9h2v1h-2zM1 10h1v1h-1zM6 10h3v1h-3zM14 10h2v1h-2zM1 11h1v1h-1zM8 11h1v1h-1zM1 12h8v1h-8zM13 12h3v1h-3zM13 13h3v1h-3z"/><path fill="#00ffff" d="M0 5h1v1h-1zM0 6h1v1h-1zM0 7h1v1h-1zM0 8h1v1h-1zM0 9h1v1h-1zM0 10h1v1h-1zM0 11h1v1h-1zM0 12h1v1h-1z"/><path fill="#ffff00" d="M3 5h1v1h-1zM5 5h1v1h-1zM2 6h1v1h-1zM4 6h1v1h-1zM3 7h1v1h-1zM5 7h2v1h-2zM8 7h1v1h-1zM10 7h1v1h-1zM2 8h1v1h-1zM4 8h1v1h-1zM3 9h1v1h-1zM5 9h3v1h-3zM2 10h1v1h-1zM4 10h1v1h-1zM3 11h1v1h-1zM5 11h3v1h-3z"/><path fill="#fff" d="M4 5h1v1h-1zM3 6h1v1h-1zM2 7h1v1h-1zM4 7h1v1h-1zM7 7h1v1h-1zM9 7h1v1h-1zM11 7h1v1h-1zM3 8h1v1h-1zM5 8h1v1h-1zM2 9h1v1h-1zM4 9h1v1h-1zM3 10h1v1h-1zM5 10h1v1h-1zM2 11h1v1h-1zM4 11h1v1h-1z"/><path fill="#ff0000" d="M14 6h2v1h-2zM14 7h2v1h-2z"/></svg>
<div class="t " style="left:498px;top:99px;">Bankrückläufer</div>
<svg class="a" style="left:574px;top:97px" width="16" height="16" viewBox="0 0 16 16"><path d="M0 3L3 0H5.500L6.500 1.500 2.500 5.800 0 5z" fill="#000"/><path d="M6.500 1.500L8 3.500 3.800 7.800 2.200 5.800z" fill="#00f0f0"/><path d="M4 7.500L7.800 3.700 11.500 4 12.300 9 12.800 11.500 9 12.800 6.800 12z" fill="#fbfb60" stroke="#000" stroke-width="1"/><path d="M9 5.300l1-.5M9.500 8.300l2.200 2.400M8.300 10.300l1.200.8" stroke="#000" stroke-width="1"/><rect x="11.200" y="1.200" width="2" height="9" fill="#c8c800"/><path d="M13.600 1v12.500M12.300 11v4" stroke="#000" stroke-width="1"/><path d="M1 14.500h9.800" stroke="#808080" stroke-width="1"/><rect x="10.800" y="0" width="3.300" height="1.200" fill="#f00"/></svg>
<div class="t " style="left:593px;top:99px;">Gegenbuchung</div>
<svg class="a" style="left:671px;top:97px" width="16" height="16" viewBox="0 0 16 16" shape-rendering="crispEdges"><path fill="#00ffff" d="M0 0h4v1h-4zM0 1h3v1h-3zM0 2h2v1h-2zM0 3h1v1h-1z"/><path fill="#000" d="M4 0h9v1h-9zM3 1h1v1h-1zM8 1h2v1h-2zM12 1h2v1h-2zM2 2h1v1h-1zM6 2h1v1h-1zM10 2h1v1h-1zM12 2h1v1h-1zM14 2h1v1h-1zM1 3h1v1h-1zM8 3h1v1h-1zM12 3h4v1h-4zM1 4h2v1h-2zM7 4h1v1h-1zM10 4h1v1h-1zM15 4h1v1h-1zM1 5h1v1h-1zM6 5h1v1h-1zM8 5h1v1h-1zM11 5h1v1h-1zM15 5h1v1h-1zM1 6h2v1h-2zM6 6h1v1h-1zM9 6h1v1h-1zM12 6h1v1h-1zM15 6h1v1h-1zM2 7h2v1h-2zM6 7h2v1h-2zM10 7h1v1h-1zM12 7h2v1h-2zM15 7h1v1h-1zM3 8h2v1h-2zM6 8h2v1h-2zM11 8h2v1h-2zM15 8h1v1h-1zM4 9h1v1h-1zM13 9h1v1h-1zM15 9h1v1h-1zM4 10h1v1h-1zM15 10h1v1h-1zM4 11h1v1h-1zM6 11h2v1h-2zM9 11h2v1h-2zM12 11h2v1h-2zM15 11h1v1h-1zM4 12h1v1h-1zM15 12h1v1h-1zM4 13h1v1h-1zM6 13h3v1h-3zM10 13h1v1h-1zM12 13h2v1h-2zM15 13h1v1h-1zM4 14h1v1h-1zM15 14h1v1h-1zM4 15h12v1h-12z"/><path fill="#ffff00" d="M4 1h1v1h-1zM6 1h1v1h-1zM3 2h1v1h-1zM5 2h1v1h-1zM7 2h3v1h-3zM2 3h1v1h-1zM4 3h1v1h-1zM6 3h1v1h-1zM3 4h1v1h-1zM5 4h1v1h-1zM8 4h1v1h-1zM2 5h1v1h-1zM4 5h1v1h-1zM9 5h1v1h-1zM3 6h1v1h-1zM5 6h1v1h-1zM10 6h1v1h-1zM4 7h1v1h-1zM11 7h1v1h-1zM5 8h1v1h-1z"/><path fill="#fff" d="M5 1h1v1h-1zM7 1h1v1h-1zM10 1h2v1h-2zM4 2h1v1h-1zM11 2h1v1h-1zM13 2h1v1h-1zM3 3h1v1h-1zM5 3h1v1h-1zM7 3h1v1h-1zM9 3h3v1h-3zM4 4h1v1h-1zM6 4h1v1h-1zM9 4h1v1h-1zM11 4h4v1h-4zM3 5h1v1h-1zM5 5h1v1h-1zM7 5h1v1h-1zM10 5h1v1h-1zM12 5h3v1h-3zM4 6h1v1h-1zM7 6h2v1h-2zM11 6h1v1h-1zM13 6h2v1h-2zM5 7h1v1h-1zM8 7h2v1h-2zM14 7h1v1h-1zM8 8h3v1h-3zM13 8h2v1h-2zM5 9h8v1h-8zM14 9h1v1h-1zM5 10h10v1h-10zM5 11h1v1h-1zM8 11h1v1h-1zM11 11h1v1h-1zM14 11h1v1h-1zM5 12h10v1h-10zM5 13h1v1h-1zM9 13h1v1h-1zM11 13h1v1h-1zM14 13h1v1h-1zM5 14h10v1h-10z"/></svg>
<div class="t " style="left:690px;top:99px;">Ratenzahlung</div>
<svg class="a" style="left:763px;top:97px" width="16" height="16" viewBox="0 0 16 16"><path d="M0 3L3 0H5.500L6.500 1.500 2.500 5.800 0 5z" fill="#000"/><path d="M6.500 1.500L8 3.500 3.800 7.800 2.200 5.800z" fill="#00f0f0"/><path d="M4 7.500L7.800 3.700 11.500 4 12.300 9 12.800 11.500 9 12.800 6.800 12z" fill="#fbfb60" stroke="#000" stroke-width="1"/><path d="M9 5.300l1-.5M9.500 8.300l2.200 2.400M8.300 10.300l1.200.8" stroke="#000" stroke-width="1"/><rect x="11.200" y="1.200" width="2" height="9" fill="#c8c800"/><path d="M13.600 1v12.500M12.300 11v4" stroke="#000" stroke-width="1"/><path d="M1 14.500h9.800" stroke="#808080" stroke-width="1"/><rect x="10.800" y="14.800" width="3.300" height="1.200" fill="#f00"/></svg>
<div class="t " style="left:782px;top:99px;">Stornobuchung</div>
<svg class="a" style="left:862px;top:97px" width="17" height="16" viewBox="0 0 17 16"><path d="M10 6L15 .5H16.500V3.500L12 8.500z" fill="#ffff00" stroke="#202000" stroke-width=".7"/><path d="M10.500 6.500l1.500 2M12 5l1.500 2M13.500 3.500l1.500 1.500" stroke="#303000" stroke-width=".6" stroke-dasharray=".8 .8"/><path d="M7 9L10 6 12 8.500 9.500 11.500 7.500 11z" fill="#ff0000" stroke="#300" stroke-width=".6"/><path d="M6 10.500C3 9.500 .8 11.500 1 13.500 1.200 15.500 4.500 15.500 6 13.500M6 10L6.800 14.800 9 15" fill="none" stroke="#000" stroke-width="2"/><path d="M1.500 8l.3-1.500 2-.5" fill="none" stroke="#000" stroke-width="1.600"/><path d="M3 2.500h1M4 4.500h1M5 6.500h1M4 7.500h1M4 9.500h1M9 13.500h1M11 14.500h1" stroke="#000" stroke-width="1"/></svg>
<div class="t " style="left:880px;top:99px;">Nullbuchungen löschen</div>
<svg class="a" style="left:299px;top:119px" width="17" height="16" viewBox="0 0 17 16"><path d="M.5 .5h5.500l3.500 3.500v7.500h-9z" fill="#fff" stroke="#000" stroke-width="1.200"/><path d="M5.500 .5v4h4" fill="none" stroke="#000" stroke-width="1.200"/><path d="M2 2.500h2M2 4.500h2M2 6.500h2M2 8.500h2" stroke="#000"/><path d="M5.500 7h4.500v-3l5.500 5.300-5.500 5.700v-3.500h-4.500z" fill="#ff0000"/><path d="M10 4l5.500 5.300-5.500 5.700" fill="none" stroke="#400" stroke-width=".5"/></svg>
<div class="t " style="left:317px;top:120px;">Rückzahlung</div>
<div class="a" style="left:294px;top:140px;width:252px;height:25px;border:1px solid #dcdcdc"></div>
<div class="t " style="left:301px;top:134px;background:#f0f0f0;padding:0 1px">Ansicht Buchungen</div>
<div class="a" style="left:298px;top:150px;width:11px;height:11px;background:#fff;border:1px solid #6e6e6e"></div>
<div class="t " style="left:313px;top:150px;">nur offen</div>
<div class="a" style="left:360px;top:150px;width:11px;height:11px;background:#fff;border:1px solid #6e6e6e"></div>
<div class="t " style="left:375px;top:150px;">nur KT</div>
<div class="a" style="left:422px;top:150px;width:11px;height:11px;background:#fff;border:1px solid #6e6e6e"></div>
<div class="t " style="left:437px;top:150px;">nur VP</div>
<div class="a" style="left:294px;top:165px;width:194px;height:33px;border:1px solid #dcdcdc"></div>
<svg class="a" style="left:302px;top:181px" width="13" height="13" viewBox="0 0 13 13"><circle cx="6.500" cy="6.500" r="5.800" fill="#fff" stroke="#333" stroke-width="1"/><circle cx="6.500" cy="6.500" r="3.400" fill="#333"/></svg>
<div class="t " style="left:317px;top:181px;">Soll u.Ist</div>
<svg class="a" style="left:363px;top:181px" width="13" height="13" viewBox="0 0 13 13"><circle cx="6.500" cy="6.500" r="5.800" fill="#fff" stroke="#333" stroke-width="1"/></svg>
<div class="t " style="left:378px;top:181px;">nur Soll</div>
<svg class="a" style="left:424px;top:181px" width="13" height="13" viewBox="0 0 13 13"><circle cx="6.500" cy="6.500" r="5.800" fill="#fff" stroke="#333" stroke-width="1"/></svg>
<div class="t " style="left:440px;top:181px;">nur Ist</div>
<div class="t " style="right:455px;top:181px;">Summe Soll:</div>
<div class="inp" style="left:629px;top:177px;width:59px">89.00</div>
<div class="t " style="right:334px;top:181px;">Summe Ist:</div>
<div class="inp" style="left:750px;top:177px;width:59px">0.00</div>
<div class="t " style="right:225px;top:181px;">Soll - Ist:</div>
<div class="inp" style="left:859px;top:177px;width:59px">89.00</div>
<div class="t " style="right:136px;top:181px;">Jahr:</div>
<div class="a" style="left:948px;top:177px;width:102px;height:21px;background:#e1e1e1;border:1px solid #adadad"></div>
<div class="t " style="left:952px;top:181px;">2025</div>
<svg class="a" style="left:1035px;top:184px" width="10" height="7" viewBox="0 0 10 7"><path d="M.8 1l4.200 4.200 4.200-4.200" fill="none" stroke="#404040" stroke-width="1.200"/></svg>
<div class="a" style="left:291px;top:201px;width:783px;height:330px;background:#fff"></div>
<div class="a" style="left:291px;top:201px;width:783px;height:1px;background:#a0a0a0"></div>
<div class="a" style="left:291px;top:202px;width:783px;height:1px;background:#696969"></div>
<div class="a" style="left:291px;top:201px;width:1px;height:445px;background:#a0a0a0"></div>
<div class="a" style="left:292px;top:202px;width:1px;height:444px;background:#696969"></div>
<div class="a" style="left:293px;top:531px;width:781px;height:1px;background:#a4a4ac"></div>
<div class="a" style="left:1073px;top:203px;width:1px;height:329px;background:#a4a4ac"></div>
<div class="a" style="left:295px;top:205px;width:777px;height:16px;background:#f0f0f0"></div>
<div class="a" style="left:319px;top:205px;width:1px;height:17px;background:#696969"></div>
<div class="a" style="left:320px;top:205px;width:1px;height:16px;background:#fff"></div>
<div class="t" style="left:296px;top:207px">Lfd:</div>
<div class="a" style="left:334px;top:205px;width:1px;height:17px;background:#696969"></div>
<div class="a" style="left:335px;top:205px;width:1px;height:16px;background:#fff"></div>
<div class="t" style="left:321px;top:207px">A</div>
<div class="a" style="left:394px;top:205px;width:1px;height:17px;background:#696969"></div>
<div class="a" style="left:395px;top:205px;width:1px;height:16px;background:#fff"></div>
<div class="t" style="left:336px;top:207px"><b style="letter-spacing:1px">Monat</b></div>
<div class="a" style="left:469px;top:205px;width:1px;height:17px;background:#696969"></div>
<div class="a" style="left:470px;top:205px;width:1px;height:16px;background:#fff"></div>
<div class="t" style="left:396px;top:207px">Buchungsdat.</div>
<div class="a" style="left:619px;top:205px;width:1px;height:17px;background:#696969"></div>
<div class="a" style="left:620px;top:205px;width:1px;height:16px;background:#fff"></div>
<div class="t" style="left:471px;top:207px">Buchungstext</div>
<div class="a" style="left:684px;top:205px;width:1px;height:17px;background:#696969"></div>
<div class="a" style="left:685px;top:205px;width:1px;height:16px;background:#fff"></div>
<div class="t" style="left:621px;top:207px">Fälligdatum</div>
<div class="a" style="left:729px;top:205px;width:1px;height:17px;background:#696969"></div>
<div class="a" style="left:730px;top:205px;width:1px;height:16px;background:#fff"></div>
<div class="t" style="right:354px;top:207px">Soll</div>
<div class="a" style="left:774px;top:205px;width:1px;height:17px;background:#696969"></div>
<div class="a" style="left:775px;top:205px;width:1px;height:16px;background:#fff"></div>
<div class="t" style="right:309px;top:207px">Ist</div>
<div class="a" style="left:864px;top:205px;width:1px;height:17px;background:#696969"></div>
<div class="a" style="left:865px;top:205px;width:1px;height:16px;background:#fff"></div>
<div class="t" style="left:776px;top:207px">Kostenart</div>
<div class="a" style="left:958px;top:205px;width:1px;height:17px;background:#696969"></div>
<div class="a" style="left:959px;top:205px;width:1px;height:16px;background:#fff"></div>
<div class="t" style="left:866px;top:207px">Debitornummer</div>
<div class="a" style="left:1003px;top:205px;width:1px;height:17px;background:#696969"></div>
<div class="a" style="left:1004px;top:205px;width:1px;height:16px;background:#fff"></div>
<div class="t" style="right:80px;top:207px">offen</div>
<div class="a" style="left:1033px;top:205px;width:1px;height:17px;background:#696969"></div>
<div class="a" style="left:1034px;top:205px;width:1px;height:16px;background:#fff"></div>
<div class="t" style="right:50px;top:207px">FW</div>
<div class="a" style="left:1063px;top:205px;width:1px;height:17px;background:#696969"></div>
<div class="a" style="left:1064px;top:205px;width:1px;height:16px;background:#fff"></div>
<div class="t" style="right:20px;top:207px"><span style="letter-spacing:-0.7px">SEPA</span></div>
<div class="t" style="left:1065px;top:207px">R</div>
<div class="a" style="left:320px;top:221px;width:752px;height:1px;background:#8a8a8a"></div>
<div class="a" style="left:294px;top:221px;width:25px;height:1px;background:#f0f0f0"></div>
<div class="a" style="left:319px;top:222px;width:1px;height:68px;background:#696969"></div>
<div class="a" style="left:294px;top:289px;width:26px;height:1px;background:#696969"></div>
<div class="a" style="left:320px;top:222px;width:752px;height:16px;background:#0078d7"></div>
<div class="a" style="left:320px;top:238px;width:752px;height:1px;background:#c0c0c0"></div>
<div class="t" style="left:296px;top:224px;color:#000;">1</div>
<div class="t" style="left:321px;top:224px;color:#fff;">X</div>
<div class="t" style="left:336px;top:224px;color:#fff;letter-spacing:0.12px;">06-25</div>
<div class="t" style="left:396px;top:224px;color:#fff;letter-spacing:0.12px;">16.06.2025</div>
<div class="t" style="left:471px;top:224px;color:#fff;"></div>
<div class="t" style="left:621px;top:224px;color:#fff;letter-spacing:0.12px;">01.06.2025</div>
<div class="t" style="right:354px;top:224px;color:#fff;">0.00</div>
<div class="t" style="right:309px;top:224px;color:#fff;">0.00</div>
<div class="t" style="left:776px;top:224px;color:#fff;">Beitrag</div>
<div class="t" style="left:866px;top:224px;color:#fff;">06</div>
<div class="t" style="right:80px;top:224px;color:#fff;">0.00</div>
<div class="t" style="right:50px;top:224px;color:#fff;">0</div>
<div class="t" style="right:20px;top:224px;color:#fff;">0</div>
<div class="t" style="left:1065px;top:224px;color:#fff;">0</div>
<div class="a" style="left:320px;top:255px;width:752px;height:1px;background:#c0c0c0"></div>
<div class="t" style="left:296px;top:241px;color:#000;">2</div>
<div class="t" style="left:321px;top:241px;color:#000;">X</div>
<div class="t" style="left:336px;top:241px;color:#000;letter-spacing:0.12px;">06-25</div>
<div class="t" style="left:396px;top:241px;color:#000;letter-spacing:0.12px;">16.06.2025</div>
<div class="t" style="left:471px;top:241px;color:#000;"></div>
<div class="t" style="left:621px;top:241px;color:#000;letter-spacing:0.12px;">01.06.2025</div>
<div class="t" style="right:354px;top:241px;color:#000;">35.00</div>
<div class="t" style="right:309px;top:241px;color:#000;">0.00</div>
<div class="t" style="left:776px;top:241px;color:#000;">Verplfegung U3</div>
<div class="t" style="left:866px;top:241px;color:#000;">06</div>
<div class="a" style="left:959px;top:239px;width:44px;height:16px;background:#ff0000"></div>
<div class="t" style="right:80px;top:241px;color:#000;">35.00</div>
<div class="t" style="right:50px;top:241px;color:#000;">0</div>
<div class="t" style="right:20px;top:241px;color:#000;">0</div>
<div class="t" style="left:1065px;top:241px;color:#000;">0</div>
<div class="a" style="left:320px;top:272px;width:752px;height:1px;background:#c0c0c0"></div>
<div class="t" style="left:296px;top:258px;color:#000;">3</div>
<div class="t" style="left:321px;top:258px;color:#000;">X</div>
<div class="t" style="left:336px;top:258px;color:#000;letter-spacing:0.12px;">06-25</div>
<div class="t" style="left:396px;top:258px;color:#000;letter-spacing:0.12px;">16.06.2025</div>
<div class="t" style="left:471px;top:258px;color:#000;"></div>
<div class="t" style="left:621px;top:258px;color:#000;letter-spacing:0.12px;">01.06.2025</div>
<div class="t" style="right:354px;top:258px;color:#000;">4.00</div>
<div class="t" style="right:309px;top:258px;color:#000;">0.00</div>
<div class="t" style="left:776px;top:258px;color:#000;">Spielgeld</div>
<div class="t" style="left:866px;top:258px;color:#000;">06</div>
<div class="a" style="left:959px;top:256px;width:44px;height:16px;background:#ff0000"></div>
<div class="t" style="right:80px;top:258px;color:#000;">4.00</div>
<div class="t" style="right:50px;top:258px;color:#000;">0</div>
<div class="t" style="right:20px;top:258px;color:#000;">0</div>
<div class="t" style="left:1065px;top:258px;color:#000;">0</div>
<div class="a" style="left:320px;top:289px;width:752px;height:1px;background:#c0c0c0"></div>
<div class="t" style="left:296px;top:275px;color:#000;">4</div>
<div class="t" style="left:321px;top:275px;color:#000;">X</div>
<div class="t" style="left:336px;top:275px;color:#000;letter-spacing:0.12px;">06-25</div>
<div class="t" style="left:396px;top:275px;color:#000;letter-spacing:0.12px;">16.06.2025</div>
<div class="t" style="left:471px;top:275px;color:#000;"></div>
<div class="t" style="left:621px;top:275px;color:#000;letter-spacing:0.12px;">01.06.2025</div>
<div class="t" style="right:354px;top:275px;color:#000;">50.00</div>
<div class="t" style="right:309px;top:275px;color:#000;">0.00</div>
<div class="t" style="left:776px;top:275px;color:#000;">Zusatzbetreuung</div>
<div class="t" style="left:866px;top:275px;color:#000;">06</div>
<div class="a" style="left:959px;top:273px;width:44px;height:16px;background:#ff0000"></div>
<div class="t" style="right:80px;top:275px;color:#000;">50.00</div>
<div class="t" style="right:50px;top:275px;color:#000;">0</div>
<div class="t" style="right:20px;top:275px;color:#000;">0</div>
<div class="t" style="left:1065px;top:275px;color:#000;">0</div>
<div class="a" style="left:334px;top:222px;width:1px;height:68px;background:#c0c0c0"></div>
<div class="a" style="left:394px;top:222px;width:1px;height:68px;background:#c0c0c0"></div>
<div class="a" style="left:469px;top:222px;width:1px;height:68px;background:#c0c0c0"></div>
<div class="a" style="left:619px;top:222px;width:1px;height:68px;background:#c0c0c0"></div>
<div class="a" style="left:684px;top:222px;width:1px;height:68px;background:#c0c0c0"></div>
<div class="a" style="left:729px;top:222px;width:1px;height:68px;background:#c0c0c0"></div>
<div class="a" style="left:774px;top:222px;width:1px;height:68px;background:#c0c0c0"></div>
<div class="a" style="left:864px;top:222px;width:1px;height:68px;background:#c0c0c0"></div>
<div class="a" style="left:958px;top:222px;width:1px;height:68px;background:#c0c0c0"></div>
<div class="a" style="left:1003px;top:222px;width:1px;height:68px;background:#c0c0c0"></div>
<div class="a" style="left:1033px;top:222px;width:1px;height:68px;background:#c0c0c0"></div>
<div class="a" style="left:1063px;top:222px;width:1px;height:68px;background:#c0c0c0"></div>
<div class="a" style="left:295px;top:514px;width:777px;height:16px;background:#f0f0f0"></div>
<div class="a" style="left:312px;top:514px;width:17px;height:15px;background:#cdcdcd"></div>
<svg class="a" style="left:299px;top:517px" width="8" height="9" viewBox="0 0 8 9"><path d="M6.200 1l-3.700 3.500 3.700 3.500" fill="none" stroke="#505050" stroke-width="2"/></svg>
<svg class="a" style="left:1060px;top:517px" width="8" height="9" viewBox="0 0 8 9"><path d="M1.800 1l3.700 3.500-3.700 3.500" fill="none" stroke="#505050" stroke-width="2"/></svg>
<div class="t " style="left:298px;top:539px;">Ausgewählte Zeilen: 1,</div>
<div class="t " style="right:371px;top:539px;">Gesamt Soll:</div>
<div class="inp" style="left:716px;top:534px;width:59px">89.00</div>
<div class="t " style="right:243px;top:539px;">Gesamt Ist:</div>
<div class="inp" style="left:844px;top:534px;width:59px">0.00</div>
<div class="t " style="right:123px;top:539px;">Soll - Ist:</div>
<div class="inp" style="left:964px;top:534px;width:59px">89.00</div>
<div class="t " style="left:303px;top:564px;letter-spacing:0.12px">Vertragspartner:</div>
<div class="fld" style="left:388px;top:564px;width:186px;height:16px">Decker, Riccarda</div>
<div class="t " style="left:303px;top:580px;">Kostenträger:</div>
<div class="fld" style="left:388px;top:580px;width:186px;height:16px"></div>
<div class="t " style="left:303px;top:596px;">Bemerkung:</div>
<div class="fld" style="left:388px;top:596px;width:186px;height:16px"></div>
<div class="t " style="left:303px;top:612px;">Buchungstext</div>
<div class="fld" style="left:388px;top:612px;width:186px;height:16px"></div>
<div class="t " style="left:303px;top:630px;">Übergabe SEPA:</div>
<div class="a" style="left:390px;top:631px;width:13px;height:13px;background:#fff;border:1px solid #cccccc"></div>
<svg class="a" style="left:391px;top:632px" width="11" height="11" viewBox="0 0 11 11"><path d="M2 5.500l2.500 3 5-6.500" fill="none" stroke="#c0c0c0" stroke-width="1.200"/></svg>
<div class="t " style="left:408px;top:630px;">Übergabe Finanzwesen:</div>
<div class="a" style="left:532px;top:631px;width:13px;height:13px;background:#fff;border:1px solid #cccccc"></div>
<div class="t " style="left:582px;top:564px;">Sachkonto:</div>
<div class="fld" style="left:672px;top:563px;width:122px;height:16px"></div>
<div class="t " style="left:582px;top:580px;">Gruppierungziffer:</div>
<div class="fld" style="left:672px;top:579px;width:122px;height:16px"></div>
<div class="t " style="left:582px;top:596px;">Einnahmeart:</div>
<div class="fld" style="left:672px;top:595px;width:122px;height:16px"></div>
<div class="t " style="left:582px;top:612px;">Kostenstelle:</div>
<div class="fld" style="left:672px;top:611px;width:122px;height:16px">2 ü3</div>
<div class="t " style="left:582px;top:629px;">Haushaltsstelle:</div>
<div class="fld" style="left:672px;top:629px;width:122px;height:16px"></div>
<div class="t " style="left:804px;top:564px;">Gegenkonto Soll:</div>
<div class="fld" style="left:900px;top:563px;width:122px;height:16px"></div>
<div class="t " style="left:804px;top:580px;">Gegenkonto Ist:</div>
<div class="fld" style="left:900px;top:579px;width:122px;height:16px"></div>
<div class="t " style="left:804px;top:596px;">Buchungsschl.:</div>
<div class="fld" style="left:900px;top:595px;width:122px;height:16px"></div>
<div class="t " style="left:804px;top:615px;">Zahlweg:</div>
<div class="fld" style="left:900px;top:611px;width:122px;height:16px"></div>
<div class="t " style="left:804px;top:630px;">Kostenträger:</div>
<div class="fld" style="left:900px;top:629px;width:122px;height:16px"></div>
<div class="a" style="left:291px;top:646px;width:784px;height:2px;background:#fff"></div>
<div class="a" style="left:291px;top:680px;width:784px;height:1px;background:#a0a0a0"></div>
<div class="a" style="left:291px;top:681px;width:784px;height:1px;background:#fff"></div>
<div class="btn" style="left:300px;top:653px;width:23px"></div>
<svg class="a" style="left:306px;top:657px" width="12" height="15" viewBox="0 0 12 15"><rect x="1" y="2.500" width="10" height="11" rx="1.500" fill="#fff" stroke="#000" stroke-width="1.200"/><path d="M4 2.500v-1.500h4v1.500" fill="#fff" stroke="#000" stroke-width="1"/><path d="M3 8.500l2.200 2.500 4.300-6" fill="none" stroke="#a01010" stroke-width="1.300"/></svg>
<div class="btn" style="left:586px;top:653px;width:90px"></div>
<svg class="a" style="left:591px;top:657px" width="19" height="19" viewBox="0 0 19 19"><g transform="translate(.9 .9)"><path d="M.5 7L1 4.500 3 2 5.500 .5H11L13.500 2 15 .8 17 2.500V7.500H10.500L12 5 10 3.500H6L4 5 3.500 7Z" fill="#000080"/><path d="M.5 7L1 4.500 3 2 5.500 .5H11L13.500 2 15 .8 17 2.500V7.500H10.500L12 5 10 3.500H6L4 5 3.500 7Z" transform="rotate(180 8.500 8.500)" fill="#000080"/></g><path d="M.5 7L1 4.500 3 2 5.500 .5H11L13.500 2 15 .8 17 2.500V7.500H10.500L12 5 10 3.500H6L4 5 3.500 7Z" fill="#008a00"/><path d="M.5 7L1 4.500 3 2 5.500 .5H11L13.500 2 15 .8 17 2.500V7.500H10.500L12 5 10 3.500H6L4 5 3.500 7Z" transform="rotate(180 8.500 8.500)" fill="#008a00"/><path d="M.8 6.500L1.300 4.500 3.200 2.200 5.600 1H11L13.500 2.500" fill="none" stroke="#00f000" stroke-width="1.300"/><path d="M0 9.700H6.500" stroke="#00f000" stroke-width="1.300"/><path d="M5 12L7 13.300H11L13 12 13.500 10" fill="none" stroke="#00f000" stroke-width="1.200"/></svg>
<div class="t " style="left:612px;top:659px;">A<u>k</u>tualisieren</div>
<div class="btn" style="left:684px;top:653px;width:90px"></div>
<svg class="a" style="left:712px;top:657px" width="15" height="15" viewBox="0 0 15 15"><rect x="0" y="0" width="15" height="15" rx="1" fill="#000"/><rect x="3" y="1" width="9" height="6" fill="#fff"/><rect x="3" y="1" width="9" height="1.500" fill="#f00"/><rect x="4" y="10" width="7" height="5" fill="#fff"/><rect x="5" y="11" width="2" height="3" fill="#000"/></svg>
<div class="t " style="left:732px;top:659px;">OK</div>
<div class="btn" style="left:782px;top:653px;width:90px"></div>
<svg class="a" style="left:793px;top:658px" width="14" height="15" viewBox="0 0 14 15"><path d="M1.500 2.500l10.500 11M12.500 2l-10.500 12" stroke="#7a0000" stroke-width="3.200" fill="none"/><path d="M1.500 2l10.500 11M12.500 1.500l-10.500 12" stroke="#d01010" stroke-width="2.600" fill="none"/></svg>
<div class="t " style="left:812px;top:659px;"><u>A</u>bbrechen</div>
<div class="btn" style="left:881px;top:653px;width:90px"></div>
<svg class="a" style="left:893px;top:656px" width="19" height="18" viewBox="0 0 19 18" shape-rendering="crispEdges"><rect x="6" y="0" width="7" height="3" fill="#000"/><rect x="7" y="1" width="5" height="1" fill="#00f000"/><rect x="5" y="5" width="3" height="11" fill="#e820e8"/><rect x="8" y="5" width="1" height="11" fill="#000"/><rect x="9" y="5" width="4" height="11" fill="#fff"/><rect x="9" y="5" width="4" height="6" fill="#a0f4f4"/><path d="M0 16.500h4.500v-12h9v12h4.500" fill="none" stroke="#000080" stroke-width="1.200"/><path d="M1 17.500h16" stroke="#808080" stroke-width=".8" opacity=".6"/></svg>
<div class="t " style="left:915px;top:659px;"><u>S</u>chließen</div>
<div class="btn" style="left:979px;top:653px;width:90px"></div>
<svg class="a" style="left:1007px;top:657px" width="12" height="17" viewBox="0 0 12 17"><path d="M2 5.200c0-5.200 8.500-5.200 8.500-.5 0 3-3.800 3.200-3.800 6.800" fill="none" stroke="#0a7c8c" stroke-width="3"/><path d="M1.800 4.600c.4-4.200 7.200-4.200 7.600-.6" fill="none" stroke="#38d8e0" stroke-width="1.200"/><circle cx="6.500" cy="15" r="1.900" fill="#0a7c8c"/><circle cx="6" cy="14.500" r=".9" fill="#38d8e0"/></svg>
<div class="t " style="left:1024px;top:659px;"><u>H</u>ilfe</div>
<div class="t " style="left:294px;top:715px;">Übersicht</div>
<div class="t " style="left:351px;top:715px;">Decker, David</div>
<div class="t " style="left:430px;top:715px;">Betreuung/Anmeldung</div>
<div class="t " style="left:550px;top:715px;letter-spacing:0.02px">(ab:01.06.2025)Kita Wunderland,</div>
<div class="a" style="left:289px;top:713px;width:1px;height:17px;background:#d9d9d9"></div>
<div class="a" style="left:345px;top:713px;width:1px;height:17px;background:#d9d9d9"></div>
<div class="a" style="left:424px;top:713px;width:1px;height:17px;background:#d9d9d9"></div>
<div class="a" style="left:543px;top:713px;width:1px;height:17px;background:#d9d9d9"></div>
<div class="a" style="left:718px;top:711px;width:67px;height:21px;background:#fff"></div>
<div class="a" style="left:717px;top:712px;width:1px;height:19px;background:#d9d9d9"></div>
<div class="a" style="left:785px;top:711px;width:1px;height:20px;background:#d9d9d9"></div>
<div class="t " style="left:724px;top:716px;">Buchungen</div>
<div class="a" style="left:1px;top:731px;width:1079px;height:2px;background:#fff"></div>
<div class="btn" style="left:10px;top:737px;width:23px"></div>
<svg class="a" style="left:16px;top:741px" width="12" height="15" viewBox="0 0 12 15"><rect x="1" y="2.500" width="10" height="11" rx="1.500" fill="#fff" stroke="#000" stroke-width="1.200"/><path d="M4 2.500v-1.500h4v1.500" fill="#fff" stroke="#000" stroke-width="1"/><path d="M3 8.500l2.200 2.500 4.300-6" fill="none" stroke="#a01010" stroke-width="1.300"/></svg>
<div class="btn" style="left:887px;top:737px;width:90px"></div>
<svg class="a" style="left:901px;top:741px" width="13" height="15" viewBox="0 0 13 15"><rect x="0" y="0" width="13" height="7" fill="#00e0e0"/><rect x="0" y="7" width="13" height="8" fill="#f0f000"/><circle cx="7" cy="2.500" r="1.500" fill="#000"/><path d="M7 4l-1 4 3 3 1 3M6 8l-3 5M4 5l3-.5 3 2.500" fill="none" stroke="#000" stroke-width="1.400"/></svg>
<div class="t " style="left:918px;top:743px;"><u>V</u>erlassen</div>
<div class="btn" style="left:983px;top:737px;width:90px"></div>
<svg class="a" style="left:1011px;top:741px" width="12" height="17" viewBox="0 0 12 17"><path d="M2 5.200c0-5.200 8.500-5.200 8.500-.5 0 3-3.800 3.200-3.800 6.800" fill="none" stroke="#0a7c8c" stroke-width="3"/><path d="M1.800 4.600c.4-4.200 7.200-4.200 7.600-.6" fill="none" stroke="#38d8e0" stroke-width="1.200"/><circle cx="6.500" cy="15" r="1.900" fill="#0a7c8c"/><circle cx="6" cy="14.500" r=".9" fill="#38d8e0"/></svg>
<div class="t " style="left:1029px;top:743px;"><u>H</u>ilfe</div>
<div class="a" style="left:1px;top:764px;width:1079px;height:1px;background:#8e959c"></div>
<div class="a" style="left:1079px;top:1px;width:1px;height:764px;background:#b4b6b8"></div>
<div class="win"></div>
</body></html>
